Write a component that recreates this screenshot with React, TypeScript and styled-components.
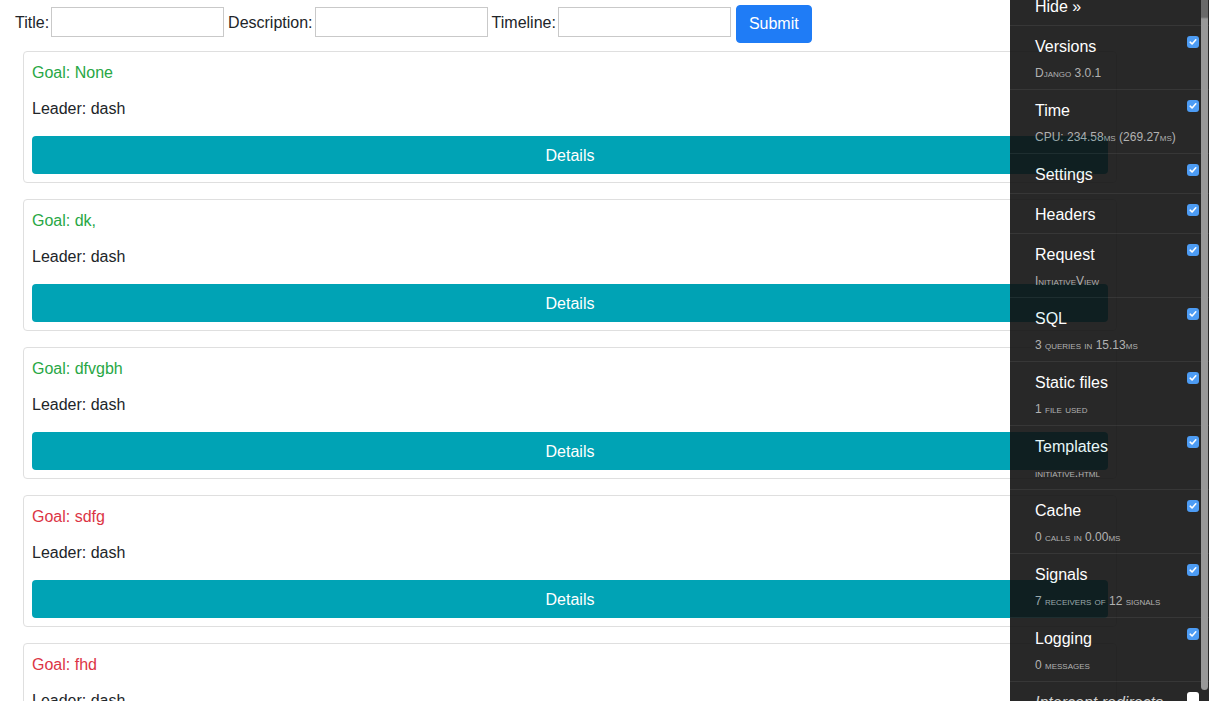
import React from "react";
import styled, { createGlobalStyle } from "styled-components";

const GlobalStyle = createGlobalStyle`
    html, body {
        margin: 0;
        padding: 0;
        overflow: hidden;
        background: #fff;
    }
    body {
        font-family: "Liberation Sans", Arial, Helvetica, sans-serif;
        font-size: 16px;
        color: #212529;
    }
    * {
        box-sizing: border-box;
    }
`;

const Page = styled.div`
    padding: 0 0 0 15px;
`;

const Form = styled.form`
    display: flex;
    align-items: flex-start;
    gap: 4px;
    padding-top: 5px;
    height: 51px;
`;

const Label = styled.label`
    line-height: 24px;
    margin-top: 6px;
    margin-right: -2px;
`;

const Input = styled.input`
    width: 173px;
    height: 30px;
    margin: 2px 0 0;
    border: 1px solid #c9c9c9;
    background: #fff;
    font-size: 14px;
    padding: 2px 4px;
`;

const SubmitButton = styled.button`
    height: 38px;
    padding: 6px 12px;
    margin-left: 1px;
    border: 1px solid #1f7cf6;
    border-radius: 4px;
    background: #1f7cf6;
    color: #fff;
    font-family: inherit;
    font-size: 16px;
    line-height: 24px;
`;

const CardList = styled.div`
    display: flex;
    flex-direction: column;
    gap: 16px;
    padding-left: 8px;
`;

const Card = styled.div`
    width: 1094px;
    border: 1px solid #dfdfdf;
    border-radius: 4px;
    padding: 8px;
`;

const Goal = styled.p<{ $ok: boolean }>`
    margin: 0 0 12px;
    line-height: 24px;
    padding-top: 1px;
    height: 24px;
    color: ${(p) => (p.$ok ? "#28a745" : "#dc3545")};
`;

const Leader = styled.p`
    margin: 0 0 16px;
    line-height: 24px;
    padding-top: 1px;
    height: 24px;
`;

const DetailsButton = styled.button`
    display: block;
    width: 100%;
    height: 38px;
    padding: 8px 12px 6px;
    border: none;
    border-radius: 4px;
    background: #00a3b5;
    color: #fff;
    font-family: inherit;
    font-size: 16px;
    line-height: 24px;
`;

/* debug toolbar */
const Toolbar = styled.div`
    position: fixed;
    top: 0;
    right: 0;
    width: 199px;
    height: 100vh;
    overflow: hidden;
    background: #111;
    opacity: 0.9;
    font-family: "Liberation Sans", Arial, Helvetica, sans-serif;
`;

const PanelList = styled.ul`
    list-style: none;
    margin: -14px 0 0;
    padding: 0;
`;

const PanelItem = styled.li`
    position: relative;
    border-bottom: 1px solid #222;
    padding: 11px 10px 8px 25px;
`;

const PanelTitle = styled.div<{ $italic?: boolean }>`
    color: ${(p) => (p.$italic ? "#ccc" : "#fff")};
    font-size: 16px;
    line-height: 20px;
    font-style: ${(p) => (p.$italic ? "italic" : "normal")};
    white-space: nowrap;
`;

const PanelSub = styled.small`
    display: block;
    margin-top: 8px;
    font-size: 12px;
    line-height: 16px;
    color: #aaa;
    font-variant: small-caps;
    white-space: nowrap;
`;

const Check = styled.span<{ $on: boolean }>`
    position: absolute;
    top: 10px;
    right: 10px;
    width: 12px;
    height: 12px;
    border-radius: 3px;
    background: ${(p) => (p.$on ? "#3a92f3" : "#fff")};
    display: flex;
    align-items: center;
    justify-content: center;
`;

const ScrollBar = styled.div`
    position: absolute;
    top: 0;
    right: 1px;
    width: 7px;
    height: 690px;
    border-radius: 0 0 4px 4px;
    background: linear-gradient(#5a5a5a 0, #5a5a5a 17px, #8d8d8d 19px);
`;

type Initiative = { goal: string; ok: boolean; leader: string };

const initiatives: Initiative[] = [
    { goal: "None", ok: true, leader: "dash" },
    { goal: "dk,", ok: true, leader: "dash" },
    { goal: "dfvgbh", ok: true, leader: "dash" },
    { goal: "sdfg", ok: false, leader: "dash" },
    { goal: "fhd", ok: false, leader: "dash" },
];

type Panel = { title: string; sub?: string; checked?: boolean; hide?: boolean; italic?: boolean };

const panels: Panel[] = [
    { title: "Hide »", hide: true },
    { title: "Versions", sub: "Django 3.0.1", checked: true },
    { title: "Time", sub: "CPU: 234.58ms (269.27ms)", checked: true },
    { title: "Settings", checked: true },
    { title: "Headers", checked: true },
    { title: "Request", sub: "InitiativeView", checked: true },
    { title: "SQL", sub: "3 queries in 15.13ms", checked: true },
    { title: "Static files", sub: "1 file used", checked: true },
    { title: "Templates", sub: "initiative.html", checked: true },
    { title: "Cache", sub: "0 calls in 0.00ms", checked: true },
    { title: "Signals", sub: "7 receivers of 12 signals", checked: true },
    { title: "Logging", sub: "0 messages", checked: true },
    { title: "Intercept redirects", checked: false, italic: true },
];

const CheckMark = () => (
    <svg width="8" height="8" viewBox="0 0 8 8">
        <path d="M1.2 4.2 L3.1 6 L6.8 1.8" fill="none" stroke="#fff" strokeWidth="1.6" strokeLinecap="round" strokeLinejoin="round" />
    </svg>
);

const DebugToolbar = () => (
    <Toolbar>
        <PanelList>
            {panels.map((p) => (
                <PanelItem key={p.title}>
                    <PanelTitle $italic={p.italic}>{p.title}</PanelTitle>
                    {p.sub && <PanelSub>{p.sub}</PanelSub>}
                    {!p.hide && <Check $on={!!p.checked}>{p.checked && <CheckMark />}</Check>}
                </PanelItem>
            ))}
        </PanelList>
        <ScrollBar />
    </Toolbar>
);

export default function App() {
    return (
        <>
            <GlobalStyle />
            <Page>
                <Form onSubmit={(e) => e.preventDefault()}>
                    <Label>Title:</Label>
                    <Input type="text" />
                    <Label>Description:</Label>
                    <Input type="text" />
                    <Label>Timeline:</Label>
                    <Input type="text" />
                    <SubmitButton type="submit">Submit</SubmitButton>
                </Form>
                <CardList>
                    {initiatives.map((item, i) => (
                        <Card key={i}>
                            <Goal $ok={item.ok}>Goal: {item.goal}</Goal>
                            <Leader>Leader: {item.leader}</Leader>
                            <DetailsButton>Details</DetailsButton>
                        </Card>
                    ))}
                </CardList>
            </Page>
            <DebugToolbar />
        </>
    );
}
